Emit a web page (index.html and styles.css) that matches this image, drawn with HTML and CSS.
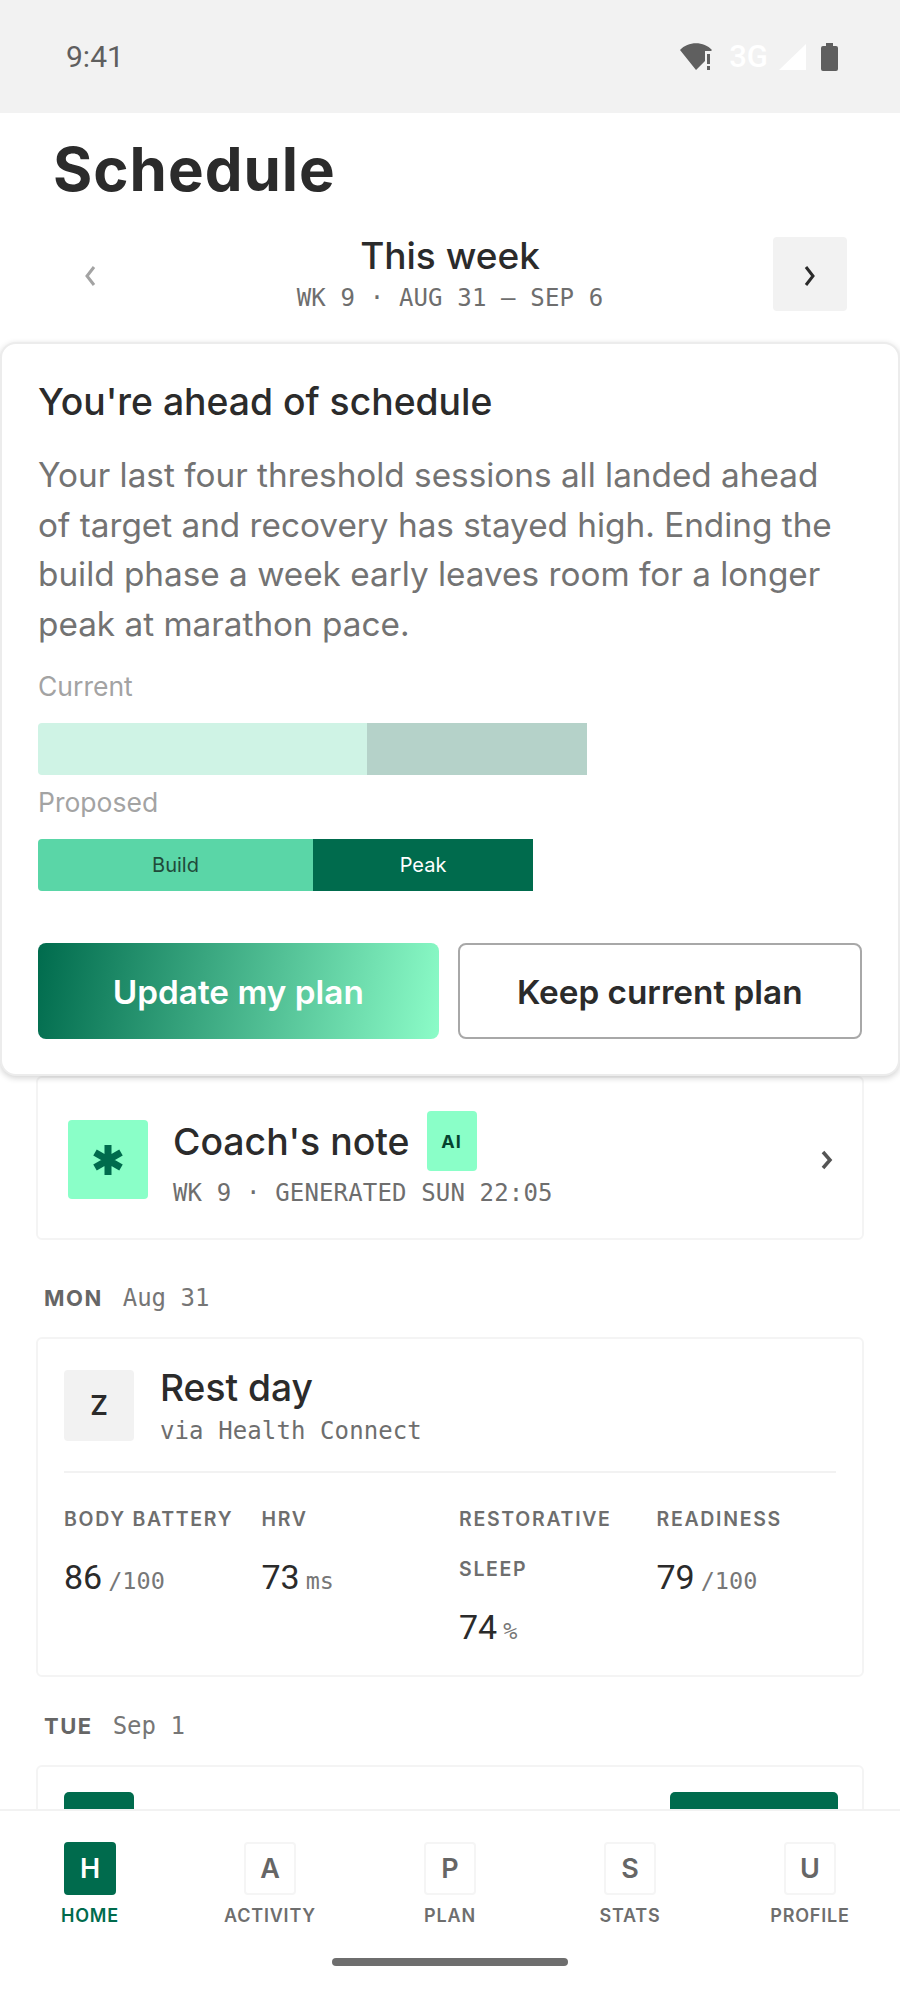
FILE: index.html
```html
<!DOCTYPE html>
<html>

<head>
  <title>Schedule</title>
  <link rel="stylesheet" href="styles.css">
</head>

<body>
  <div class="phone">

    <div class="status-bar">
      <span class="clock">9:41</span>
      <div class="status-icons">
        <svg class="wifi" width="32" height="27" viewBox="0 0 32 27">
          <path fill="#5f5f5f" d="M0 7 C8 -2 24 -2 32 7 L31 8 H25 V18 L16 27 Z"/>
          <rect fill="#5f5f5f" x="27" y="11" width="3" height="10"/>
          <rect fill="#5f5f5f" x="27" y="23" width="3" height="4"/>
        </svg>
        <span class="network">3G</span>
        <svg class="signal" width="27" height="26" viewBox="0 0 27 26">
          <path fill="#fff" d="M27 0 V26 H0 Z"/>
        </svg>
        <svg class="battery" width="17" height="28" viewBox="0 0 17 28">
          <path fill="#5f5f5f" d="M5 0 H12 V3 H15 Q17 3 17 5 V26 Q17 28 15 28 H2 Q0 28 0 26 V5 Q0 3 2 3 H5 Z"/>
        </svg>
      </div>
    </div>

    <h1 class="page-title">Schedule</h1>

    <div class="week-nav">
      <div class="week-btn">
        <svg width="14" height="22" viewBox="0 0 14 22"><path d="M11 2 L4 11 L11 20" fill="none" stroke="#a3a3a3" stroke-width="3"/></svg>
      </div>
      <div class="week-info">
        <div class="week-name">This week</div>
        <div class="week-dates">WK 9 · AUG 31 — SEP 6</div>
      </div>
      <div class="week-btn week-btn-next">
        <svg width="14" height="22" viewBox="0 0 14 22"><path d="M3 2 L10 11 L3 20" fill="none" stroke="#2b2b2b" stroke-width="3"/></svg>
      </div>
    </div>

    <div class="proposal">
      <h2 class="proposal-title">You're ahead of schedule</h2>
      <p class="proposal-text">Your last four threshold sessions all landed ahead of target and recovery has stayed high. Ending the build phase a week early leaves room for a longer peak at marathon pace.</p>

      <div class="bar-label">Current</div>
      <div class="bar">
        <div class="seg seg-build-old"></div>
        <div class="seg seg-peak-old"></div>
      </div>

      <div class="bar-label">Proposed</div>
      <div class="bar">
        <div class="seg seg-build-new">Build</div>
        <div class="seg seg-peak-new">Peak</div>
      </div>

      <div class="actions">
        <div class="action action-update">Update my plan</div>
        <div class="action action-keep">Keep current plan</div>
      </div>
    </div>

    <div class="content">
      <div class="card note">
        <div class="note-icon">
          <svg width="30" height="30" viewBox="0 0 30 30"><path stroke="#006b4d" stroke-width="7" d="M15 0 V30 M2 7.5 L28 22.5 M28 7.5 L2 22.5"/></svg>
        </div>
        <div class="note-body">
          <div class="note-head">
            <span class="note-title">Coach's note</span>
            <span class="ai-badge">AI</span>
          </div>
          <div class="note-sub">WK 9 · GENERATED SUN 22:05</div>
        </div>
        <svg class="note-arrow" width="14" height="20" viewBox="0 0 14 20"><path d="M3 2 L10 10 L3 18" fill="none" stroke="#555" stroke-width="3.5"/></svg>
      </div>

      <div class="day-label"><b>MON</b><span>Aug 31</span></div>

      <div class="card day">
        <div class="day-head">
          <div class="day-icon">Z</div>
          <div>
            <div class="day-title">Rest day</div>
            <div class="day-sub">via Health Connect</div>
          </div>
        </div>
        <div class="metrics">
          <div>
            <div class="metric-label">BODY BATTERY</div>
            <div class="metric-value">86<span>/100</span></div>
          </div>
          <div>
            <div class="metric-label">HRV</div>
            <div class="metric-value">73<span>ms</span></div>
          </div>
          <div>
            <div class="metric-label">RESTORATIVE SLEEP</div>
            <div class="metric-value">74<span>%</span></div>
          </div>
          <div>
            <div class="metric-label">READINESS</div>
            <div class="metric-value">79<span>/100</span></div>
          </div>
        </div>
      </div>

      <div class="day-label"><b>TUE</b><span>Sep 1</span></div>

      <div class="card day day-cut">
        <div class="cut-icon"></div>
        <div class="cut-tag"></div>
      </div>
    </div>

    <div class="tab-bar">
      <div class="tabs">
        <div class="tab tab-active"><div class="tab-icon">H</div><div class="tab-name">HOME</div></div>
        <div class="tab"><div class="tab-icon">A</div><div class="tab-name">ACTIVITY</div></div>
        <div class="tab"><div class="tab-icon">P</div><div class="tab-name">PLAN</div></div>
        <div class="tab"><div class="tab-icon">S</div><div class="tab-name">STATS</div></div>
        <div class="tab"><div class="tab-icon">U</div><div class="tab-name">PROFILE</div></div>
      </div>
      <div class="home-pill"></div>
    </div>

  </div>
</body>

</html>
```

FILE: styles.css
```css
* {
  box-sizing: border-box;
}

html, body {
  margin: 0;
  padding: 0;
  background-color: white;
}

.phone {
  width: 900px;
  height: 2000px;
  overflow: hidden;
  display: flex;
  flex-direction: column;
  font-family: "Inter", "Liberation Sans", sans-serif;
  color: #2b2b2b;
}

.phone > * {
  flex: none;
}

.status-bar {
  height: 113px;
  background-color: #f2f2f2;
  padding: 0 62px 0 66px;
  display: flex;
  align-items: center;
  justify-content: space-between;
}

.clock {
  font-family: "Roboto", sans-serif;
  font-size: 30px;
  color: #5f5f5f;
}

.status-icons {
  display: flex;
  align-items: center;
}

.network {
  font-family: "Roboto", sans-serif;
  font-size: 31px;
  font-weight: 500;
  color: white;
  margin: 0 11px 0 17px;
}

.signal {
  margin-right: 15px;
}

.page-title {
  margin: 25px 0 0 53px;
  font-size: 60px;
  line-height: 62px;
  font-weight: 700;
  letter-spacing: 1px;
}

.week-nav {
  margin: 37px 53px 0 53px;
  height: 74px;
  display: flex;
  align-items: center;
  justify-content: space-between;
}

.week-btn {
  width: 74px;
  height: 74px;
  padding-top: 4px;
  border-radius: 4px;
  display: flex;
  align-items: center;
  justify-content: center;
}

.week-btn-next {
  background-color: #f2f2f2;
}

.week-info {
  text-align: center;
}

.week-name {
  font-size: 37px;
  line-height: 46px;
  font-weight: 450;
}

.week-dates {
  margin-top: 2px;
  font-family: "DejaVu Sans Mono", monospace;
  font-size: 24px;
  line-height: 34px;
  letter-spacing: 0.15px;
  color: #6e6e6e;
}

.proposal {
  margin-top: 31px;
  height: 734px;
  padding: 36px 36px 0 36px;
  background-color: white;
  border: 2px solid #ececec;
  border-radius: 16px;
  box-shadow: 0 2px 6px rgba(0, 0, 0, 0.18);
  position: relative;
}

.proposal-title {
  margin: 0;
  font-size: 37.3px;
  line-height: 44px;
  font-weight: 450;
}

.proposal-text {
  max-width: 800px;
  margin: 27px 0 18px 0;
  font-size: 33.3px;
  line-height: 49.7px;
  color: #737373;
}

.bar-label {
  margin-top: 9px;
  font-size: 26.5px;
  line-height: 36px;
  color: #a3a3a3;
}

.bar {
  margin-top: 19px;
  height: 52px;
  display: flex;
}

.seg {
  display: flex;
  align-items: center;
  justify-content: center;
  font-size: 20px;
}

.seg-build-old {
  width: 329px;
  background-color: #cff3e5;
  border-radius: 4px 0 0 4px;
}

.seg-peak-old {
  width: 220px;
  background-color: #b5d2c9;
}

.seg-build-new {
  width: 275px;
  background-color: #5ad6a7;
  border-radius: 4px 0 0 4px;
  color: #1f4a3a;
}

.seg-peak-new {
  width: 220px;
  background-color: #006b4d;
  color: white;
}

.actions {
  margin-top: 52px;
  display: flex;
  gap: 19px;
}

.action {
  flex: 1;
  height: 96px;
  padding-top: 2px;
  border-radius: 8px;
  display: flex;
  align-items: center;
  justify-content: center;
  font-size: 33.3px;
  font-weight: 600;
}

.action-update {
  color: white;
  background: linear-gradient(100deg, #006b4d, #8cfcc8);
}

.action-keep {
  border: 2px solid #a8a8a8;
}

.content {
  padding: 0 36px;
  flex: 1 !important;
  min-height: 0;
  overflow: hidden;
}

.card {
  background-color: white;
  border: 2px solid #f4f4f4;
  border-radius: 6px;
}

.note {
  height: 164px;
  margin-bottom: 43px;
  padding: 3px 28px 0 30px;
  display: flex;
  align-items: center;
}

.note-icon {
  width: 80px;
  height: 79px;
  background-color: #8affc8;
  border-radius: 4px;
  display: flex;
  align-items: center;
  justify-content: center;
}

.note-body {
  flex: 1;
  margin-left: 25px;
}

.note-head {
  display: flex;
  align-items: center;
}

.note-title {
  font-size: 37.4px;
  font-weight: 450;
}

.ai-badge {
  width: 50px;
  height: 60px;
  margin-left: 17px;
  background-color: #8affc8;
  border-radius: 4px;
  display: flex;
  align-items: center;
  justify-content: center;
  font-size: 18px;
  font-weight: 700;
  letter-spacing: 1px;
  color: #04432f;
}

.note-sub {
  margin-top: 7px;
  font-family: "DejaVu Sans Mono", monospace;
  font-size: 24px;
  line-height: 30px;
  letter-spacing: 0.15px;
  color: #6e6e6e;
}

.day-label {
  margin: 34px 0 0 8px;
  height: 30px;
  display: flex;
  align-items: center;
  gap: 20px;
  font-size: 22px;
  color: #666;
}

.day-label b {
  letter-spacing: 1.5px;
}

.day-label span {
  font-family: "DejaVu Sans Mono", monospace;
  font-size: 24px;
  color: #767676;
}

.day {
  margin-top: 24px;
  padding: 30px 26px 0 26px;
  height: 340px;
}

.day-head {
  display: flex;
  gap: 26px;
  padding-bottom: 25px;
  border-bottom: 2px solid #f2f2f2;
}

.day-icon {
  width: 70px;
  height: 71px;
  margin-top: 1px;
  background-color: #f2f2f2;
  border-radius: 4px;
  display: flex;
  align-items: center;
  justify-content: center;
  font-size: 27px;
  font-weight: 600;
}

.day-title {
  font-size: 37.2px;
  line-height: 38px;
  font-weight: 450;
}

.day-sub {
  margin-top: 9px;
  font-family: "DejaVu Sans Mono", monospace;
  font-size: 24px;
  line-height: 30px;
  letter-spacing: 0.1px;
  color: #6e6e6e;
}

.metrics {
  margin-top: 21px;
  display: grid;
  grid-template-columns: repeat(4, 1fr);
  column-gap: 18px;
}

.metric-label {
  font-size: 19.5px;
  line-height: 50px;
  font-weight: 600;
  letter-spacing: 1.7px;
  color: #6e6e6e;
}

.metric-value {
  margin-top: 10px;
  font-family: "Roboto", sans-serif;
  font-size: 34px;
  line-height: 46px;
}

.metric-value span {
  margin-left: 6px;
  font-family: "DejaVu Sans Mono", monospace;
  font-size: 23.5px;
  color: #777;
}

.day-cut {
  padding: 0;
  position: relative;
}

.cut-icon {
  position: absolute;
  left: 26px;
  top: 25px;
  width: 70px;
  height: 40px;
  background-color: #006b4d;
  border-radius: 5px;
}

.cut-tag {
  position: absolute;
  right: 24px;
  top: 25px;
  width: 168px;
  height: 40px;
  background-color: #006b4d;
  border-radius: 5px;
}

.tab-bar {
  height: 191px;
  background-color: white;
  border-top: 2px solid #f2f2f2;
}

.tabs {
  padding-top: 31px;
  display: flex;
  justify-content: space-between;
}

.tab {
  width: 180px;
  display: flex;
  flex-direction: column;
  align-items: center;
}

.tab-icon {
  width: 52px;
  height: 53px;
  border: 2px solid #f5f5f5;
  border-radius: 4px;
  display: flex;
  align-items: center;
  justify-content: center;
  font-size: 27px;
  font-weight: 600;
  color: #666;
}

.tab-name {
  margin-top: 9px;
  font-size: 18px;
  line-height: 24px;
  font-weight: 600;
  letter-spacing: 0.8px;
  color: #6e6e6e;
}

.tab-active .tab-icon {
  background-color: #006b4d;
  border-color: #006b4d;
  color: white;
}

.tab-active .tab-name {
  color: #006b4d;
}

.home-pill {
  width: 236px;
  height: 8px;
  margin: 30px auto 0 auto;
  background-color: #6e6e6e;
  border-radius: 4px;
}
```
